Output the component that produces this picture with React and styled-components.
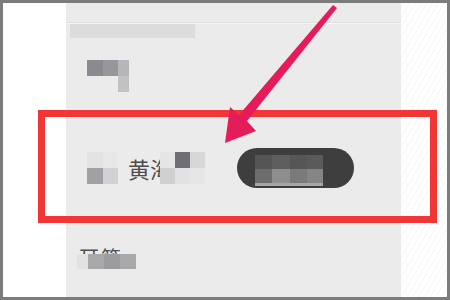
import React from "react";
import styled, { createGlobalStyle } from "styled-components";

const Global = createGlobalStyle`
  html, body { margin: 0; padding: 0; background: #ffffff; }
  body { font-family: "Noto Sans CJK SC", "Noto Sans", sans-serif; }
`;

const Frame = styled.div`
  position: relative;
  width: 450px;
  height: 300px;
  box-sizing: border-box;
  border: 3px solid #7c7c7c;
  display: flex;
  overflow: hidden;
`;

const Gutter = styled.div`
  width: 63px;
  background: #ffffff;
`;

const StripeGutter = styled.div`
  width: 46px;
  background: repeating-linear-gradient(
    -60deg,
    #ffffff 0px,
    #ffffff 4px,
    #f7f7f7 4px,
    #f7f7f7 5px
  );
`;

const Panel = styled.div`
  width: 335px;
  background: #ebebeb;
  display: flex;
  flex-direction: column;
`;

const PanelTop = styled.div`
  height: 20px;
  border-bottom: 1px solid #dedede;
  box-shadow: 0 1px 0 #f7f7f7;
`;

const SearchBar = styled.div`
  margin: 1px 0 0 4px;
  width: 125px;
  height: 15px;
  background: #dcdcdc;
`;

const Row = styled.div`
  height: ${(p) => p.h}px;
  padding: ${(p) => p.pad};
  display: flex;
  align-items: ${(p) => p.align || "flex-start"};
  box-sizing: border-box;
  border-top: ${(p) => (p.line ? "1px solid #f4f4f4" : "none")};
`;

const Mosaic = styled.div`
  display: grid;
  grid-template-columns: ${(p) => p.cols};
  grid-auto-rows: ${(p) => p.rowH}px;
  flex-shrink: 0;
`;

const Cell = styled.div`
  background: ${(p) => p.c};
`;

const Name = styled.div`
  width: 32px;
  height: 34px;
  overflow: hidden;
  white-space: nowrap;
  font-size: 22px;
  line-height: 34px;
  color: #4e4e4e;
  margin-left: 10px;
`;

const Pill = styled.div`
  margin-left: 32px;
  width: 117px;
  height: 40px;
  border-radius: 20px;
  background: #3e3e3e;
  display: flex;
  flex-direction: column;
  align-items: flex-start;
  padding: 7px 0 0 18px;
  box-sizing: border-box;
`;

const Fringe = styled.div`
  width: 68px;
  height: 3px;
  background: #a6a6a6;
`;

const Stack = styled.div`
  display: flex;
  flex-direction: column;
`;

const ClipText = styled.div`
  height: 9px;
  overflow: hidden;
  font-size: 20px;
  line-height: 26px;
  color: #505050;
  margin-left: 2px;
  letter-spacing: 2px;
`;

const Annotation = styled.svg`
  position: absolute;
  left: -3px;
  top: -3px;
  width: 450px;
  height: 300px;
  pointer-events: none;
`;

const cells = (list) => list.map((c, i) => <Cell key={i} c={c} />);

export default function App() {
  return (
    <>
      <Global />
      <Frame>
        <Gutter />
        <Panel>
          <PanelTop />
          <SearchBar />
          <Row h={80} pad="22px 0 0 21px">
            <Mosaic cols="16px 15px 11px" rowH={16}>
              {cells(["#8a8a8f", "#96969b", "#b6b6ba", "#ebebeb", "#ebebeb", "#c2c2c5"])}
            </Mosaic>
          </Row>
          <Row h={108} pad="0 0 0 21px" align="center" line>
            <Mosaic cols="16px 15px" rowH={16}>
              {cells(["#e3e3e3", "#e7e7e7", "#a0a0a5", "#d2d2d4"])}
            </Mosaic>
            <Name>黄海</Name>
            <Mosaic cols="15px 15px 15px" rowH={16}>
              {cells(["#e5e5e5", "#6e6e77", "#d7d7d9", "#d0d0d2", "#e2e2e2", "#e6e6e6"])}
            </Mosaic>
            <Pill>
              <Mosaic cols="17px 18px 17px 16px" rowH={14}>
                {cells([
                  "#555555", "#5e5e5e", "#565656", "#5a5a5a",
                  "#6c6c6c", "#8e8e8e", "#7a7a7a", "#858585",
                ])}
              </Mosaic>
              <Fringe />
            </Pill>
          </Row>
          <Row h={80} pad="25px 0 0 11px" line>
            <Stack>
              <ClipText>耳筷</ClipText>
              <Mosaic cols="11px 16px 16px 16px" rowH={15}>
                {cells(["#e2e2e2", "#a9a9ab", "#9c9ca0", "#a8a8aa"])}
              </Mosaic>
            </Stack>
          </Row>
        </Panel>
        <StripeGutter />
        <Annotation viewBox="0 0 450 300">
          <rect x="41.5" y="113.5" width="392" height="106" fill="none" stroke="#f23636" strokeWidth="7" />
          <polygon
            points="333,5 337,8 247,121 256,131 225,143 230,107 239,115"
            fill="#e61c5a"
          />
        </Annotation>
      </Frame>
    </>
  );
}
